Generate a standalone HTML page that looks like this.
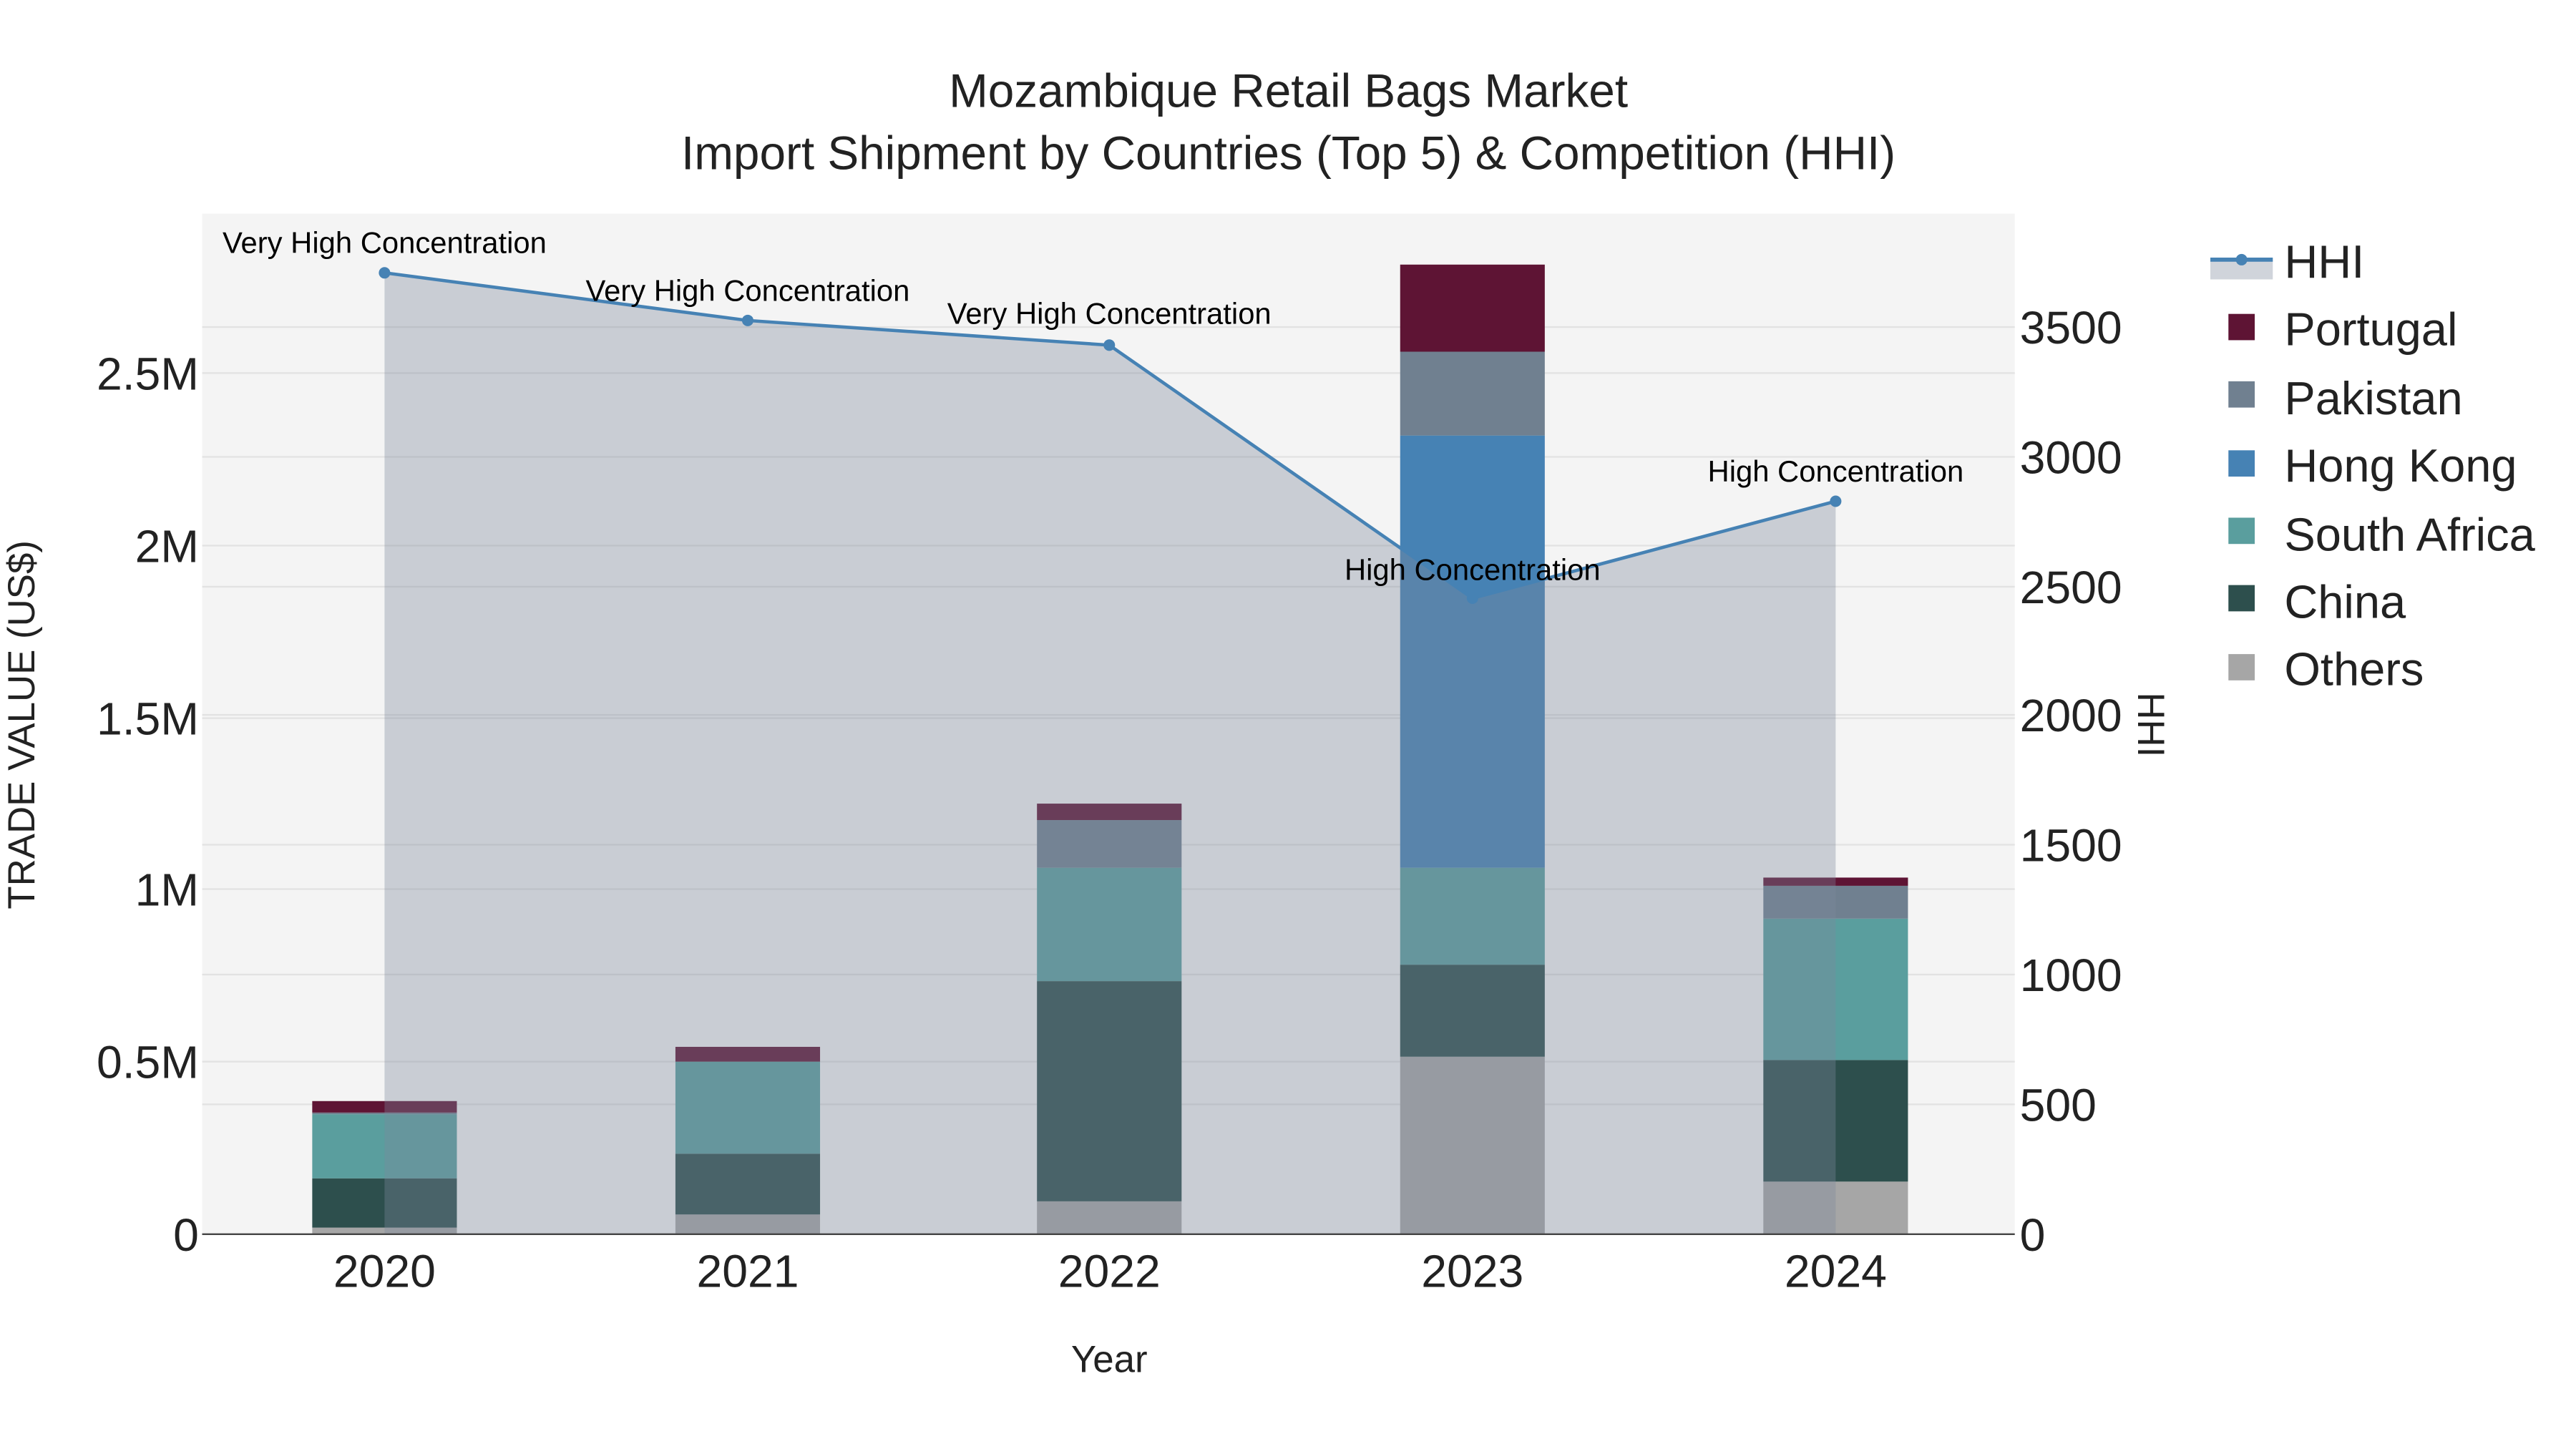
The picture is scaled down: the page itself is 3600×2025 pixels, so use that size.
<!DOCTYPE html>
<html><head><meta charset="utf-8"><style>html,body{margin:0;padding:0;background:#fff}svg{display:block}text{font-family:"Liberation Sans",sans-serif}</style></head><body>
<svg width="3600" height="2025" viewBox="0 0 1567.5 881.7" xmlns="http://www.w3.org/2000/svg">
<rect width="1567.5" height="881.7" fill="#fff"/>
<rect x="123" y="130" width="1103" height="621" fill="#f4f4f4"/>
<g stroke="#e2e2e2" stroke-width="1">
<line x1="123" x2="1226" y1="646" y2="646"/><line x1="123" x2="1226" y1="541" y2="541"/><line x1="123" x2="1226" y1="437" y2="437"/><line x1="123" x2="1226" y1="332" y2="332"/><line x1="123" x2="1226" y1="227" y2="227"/>
<line x1="123" x2="1226" y1="672" y2="672"/><line x1="123" x2="1226" y1="593" y2="593"/><line x1="123" x2="1226" y1="514" y2="514"/><line x1="123" x2="1226" y1="435" y2="435"/><line x1="123" x2="1226" y1="357" y2="357"/><line x1="123" x2="1226" y1="278" y2="278"/><line x1="123" x2="1226" y1="199" y2="199"/>
</g>
<g>
<rect x="190" y="747" width="88" height="4" fill="#a6a6a6"/><rect x="190" y="717" width="88" height="30" fill="#2d4f4d"/><rect x="190" y="678" width="88" height="39" fill="#5a9e9e"/><rect x="190" y="677" width="88" height="1" fill="#708090"/><rect x="190" y="670" width="88" height="7" fill="#5e1434"/>
<rect x="411" y="739" width="88" height="12" fill="#a6a6a6"/><rect x="411" y="702" width="88" height="37" fill="#2d4f4d"/><rect x="411" y="646" width="88" height="56" fill="#5a9e9e"/><rect x="411" y="637" width="88" height="9" fill="#5e1434"/>
<rect x="631" y="731" width="88" height="20" fill="#a6a6a6"/><rect x="631" y="597" width="88" height="134" fill="#2d4f4d"/><rect x="631" y="528" width="88" height="69" fill="#5a9e9e"/><rect x="631" y="499" width="88" height="29" fill="#708090"/><rect x="631" y="489" width="88" height="10" fill="#5e1434"/>
<rect x="852" y="643" width="88" height="108" fill="#a6a6a6"/><rect x="852" y="587" width="88" height="56" fill="#2d4f4d"/><rect x="852" y="528" width="88" height="59" fill="#5a9e9e"/><rect x="852" y="265" width="88" height="263" fill="#4682b4"/><rect x="852" y="214" width="88" height="51" fill="#708090"/><rect x="852" y="161" width="88" height="53" fill="#5e1434"/>
<rect x="1073" y="719" width="88" height="32" fill="#a6a6a6"/><rect x="1073" y="645" width="88" height="74" fill="#2d4f4d"/><rect x="1073" y="559" width="88" height="86" fill="#5a9e9e"/><rect x="1073" y="539" width="88" height="20" fill="#708090"/><rect x="1073" y="534" width="88" height="5" fill="#5e1434"/>
</g>
<polygon points="234,751 234,166 455,195 675,210 896,364 1117,305 1117,751" fill="rgb(124,135,154)" fill-opacity="0.36"/>
<line x1="123" x2="1226" y1="751" y2="751" stroke="#444" stroke-width="1"/>
<polyline points="234,166 455,195 675,210 896,364 1117,305" fill="none" stroke="#4682b4" stroke-width="2"/>
<g fill="#4682b4"><circle cx="234" cy="166" r="3.5"/><circle cx="455" cy="195" r="3.5"/><circle cx="675" cy="210" r="3.5"/><circle cx="896" cy="364" r="3.5"/><circle cx="1117" cy="305" r="3.5"/></g>
<g font-size="18.2" fill="#000" text-anchor="middle">
<text x="234" y="154">Very High Concentration</text><text x="455" y="183">Very High Concentration</text><text x="675" y="197">Very High Concentration</text><text x="896" y="353">High Concentration</text><text x="1117" y="293">High Concentration</text>
</g>
<g font-size="28" fill="#222" text-anchor="end">
<text x="121" y="761">0</text><text x="121" y="656">0.5M</text><text x="121" y="551">1M</text><text x="121" y="447">1.5M</text><text x="121" y="342">2M</text><text x="121" y="237">2.5M</text>
</g>
<g font-size="28" fill="#222" text-anchor="start">
<text x="1229" y="761">0</text><text x="1229" y="682">500</text><text x="1229" y="603">1000</text><text x="1229" y="524">1500</text><text x="1229" y="445">2000</text><text x="1229" y="367">2500</text><text x="1229" y="288">3000</text><text x="1229" y="209">3500</text>
</g>
<g font-size="28" fill="#222" text-anchor="middle">
<text x="234" y="783">2020</text><text x="455" y="783">2021</text><text x="675" y="783">2022</text><text x="896" y="783">2023</text><text x="1117" y="783">2024</text>
</g>
<text x="675" y="835" font-size="23" text-anchor="middle" fill="#222">Year</text>
<text transform="translate(21,441) rotate(-90)" font-size="23" text-anchor="middle" fill="#222">TRADE VALUE (US$)</text>
<text transform="translate(1301,441) rotate(90)" font-size="23" text-anchor="middle" fill="#222">HHI</text>
<text x="784" y="65" font-size="28.6" text-anchor="middle" fill="#222">Mozambique Retail Bags Market</text>
<text x="784" y="103" font-size="28.6" text-anchor="middle" fill="#222">Import Shipment by Countries (Top 5) &amp; Competition (HHI)</text>
<rect x="1345" y="158" width="38" height="12" fill="rgb(124,135,154)" fill-opacity="0.36"/>
<line x1="1345" x2="1383" y1="158" y2="158" stroke="#4682b4" stroke-width="2.5"/><circle cx="1364" cy="158" r="3.5" fill="#4682b4"/>
<g>
<rect x="1356" y="191" width="16" height="16" fill="#5e1434"/><rect x="1356" y="232" width="16" height="16" fill="#708090"/><rect x="1356" y="274" width="16" height="16" fill="#4682b4"/><rect x="1356" y="315" width="16" height="16" fill="#5a9e9e"/><rect x="1356" y="356" width="16" height="16" fill="#2d4f4d"/><rect x="1356" y="398" width="16" height="16" fill="#a6a6a6"/>
</g>
<g font-size="28.3" fill="#222">
<text x="1390" y="169">HHI</text><text x="1390" y="210">Portugal</text><text x="1390" y="252">Pakistan</text><text x="1390" y="293">Hong Kong</text><text x="1390" y="335">South Africa</text><text x="1390" y="376">China</text><text x="1390" y="417">Others</text>
</g>
</svg>
</body></html>
